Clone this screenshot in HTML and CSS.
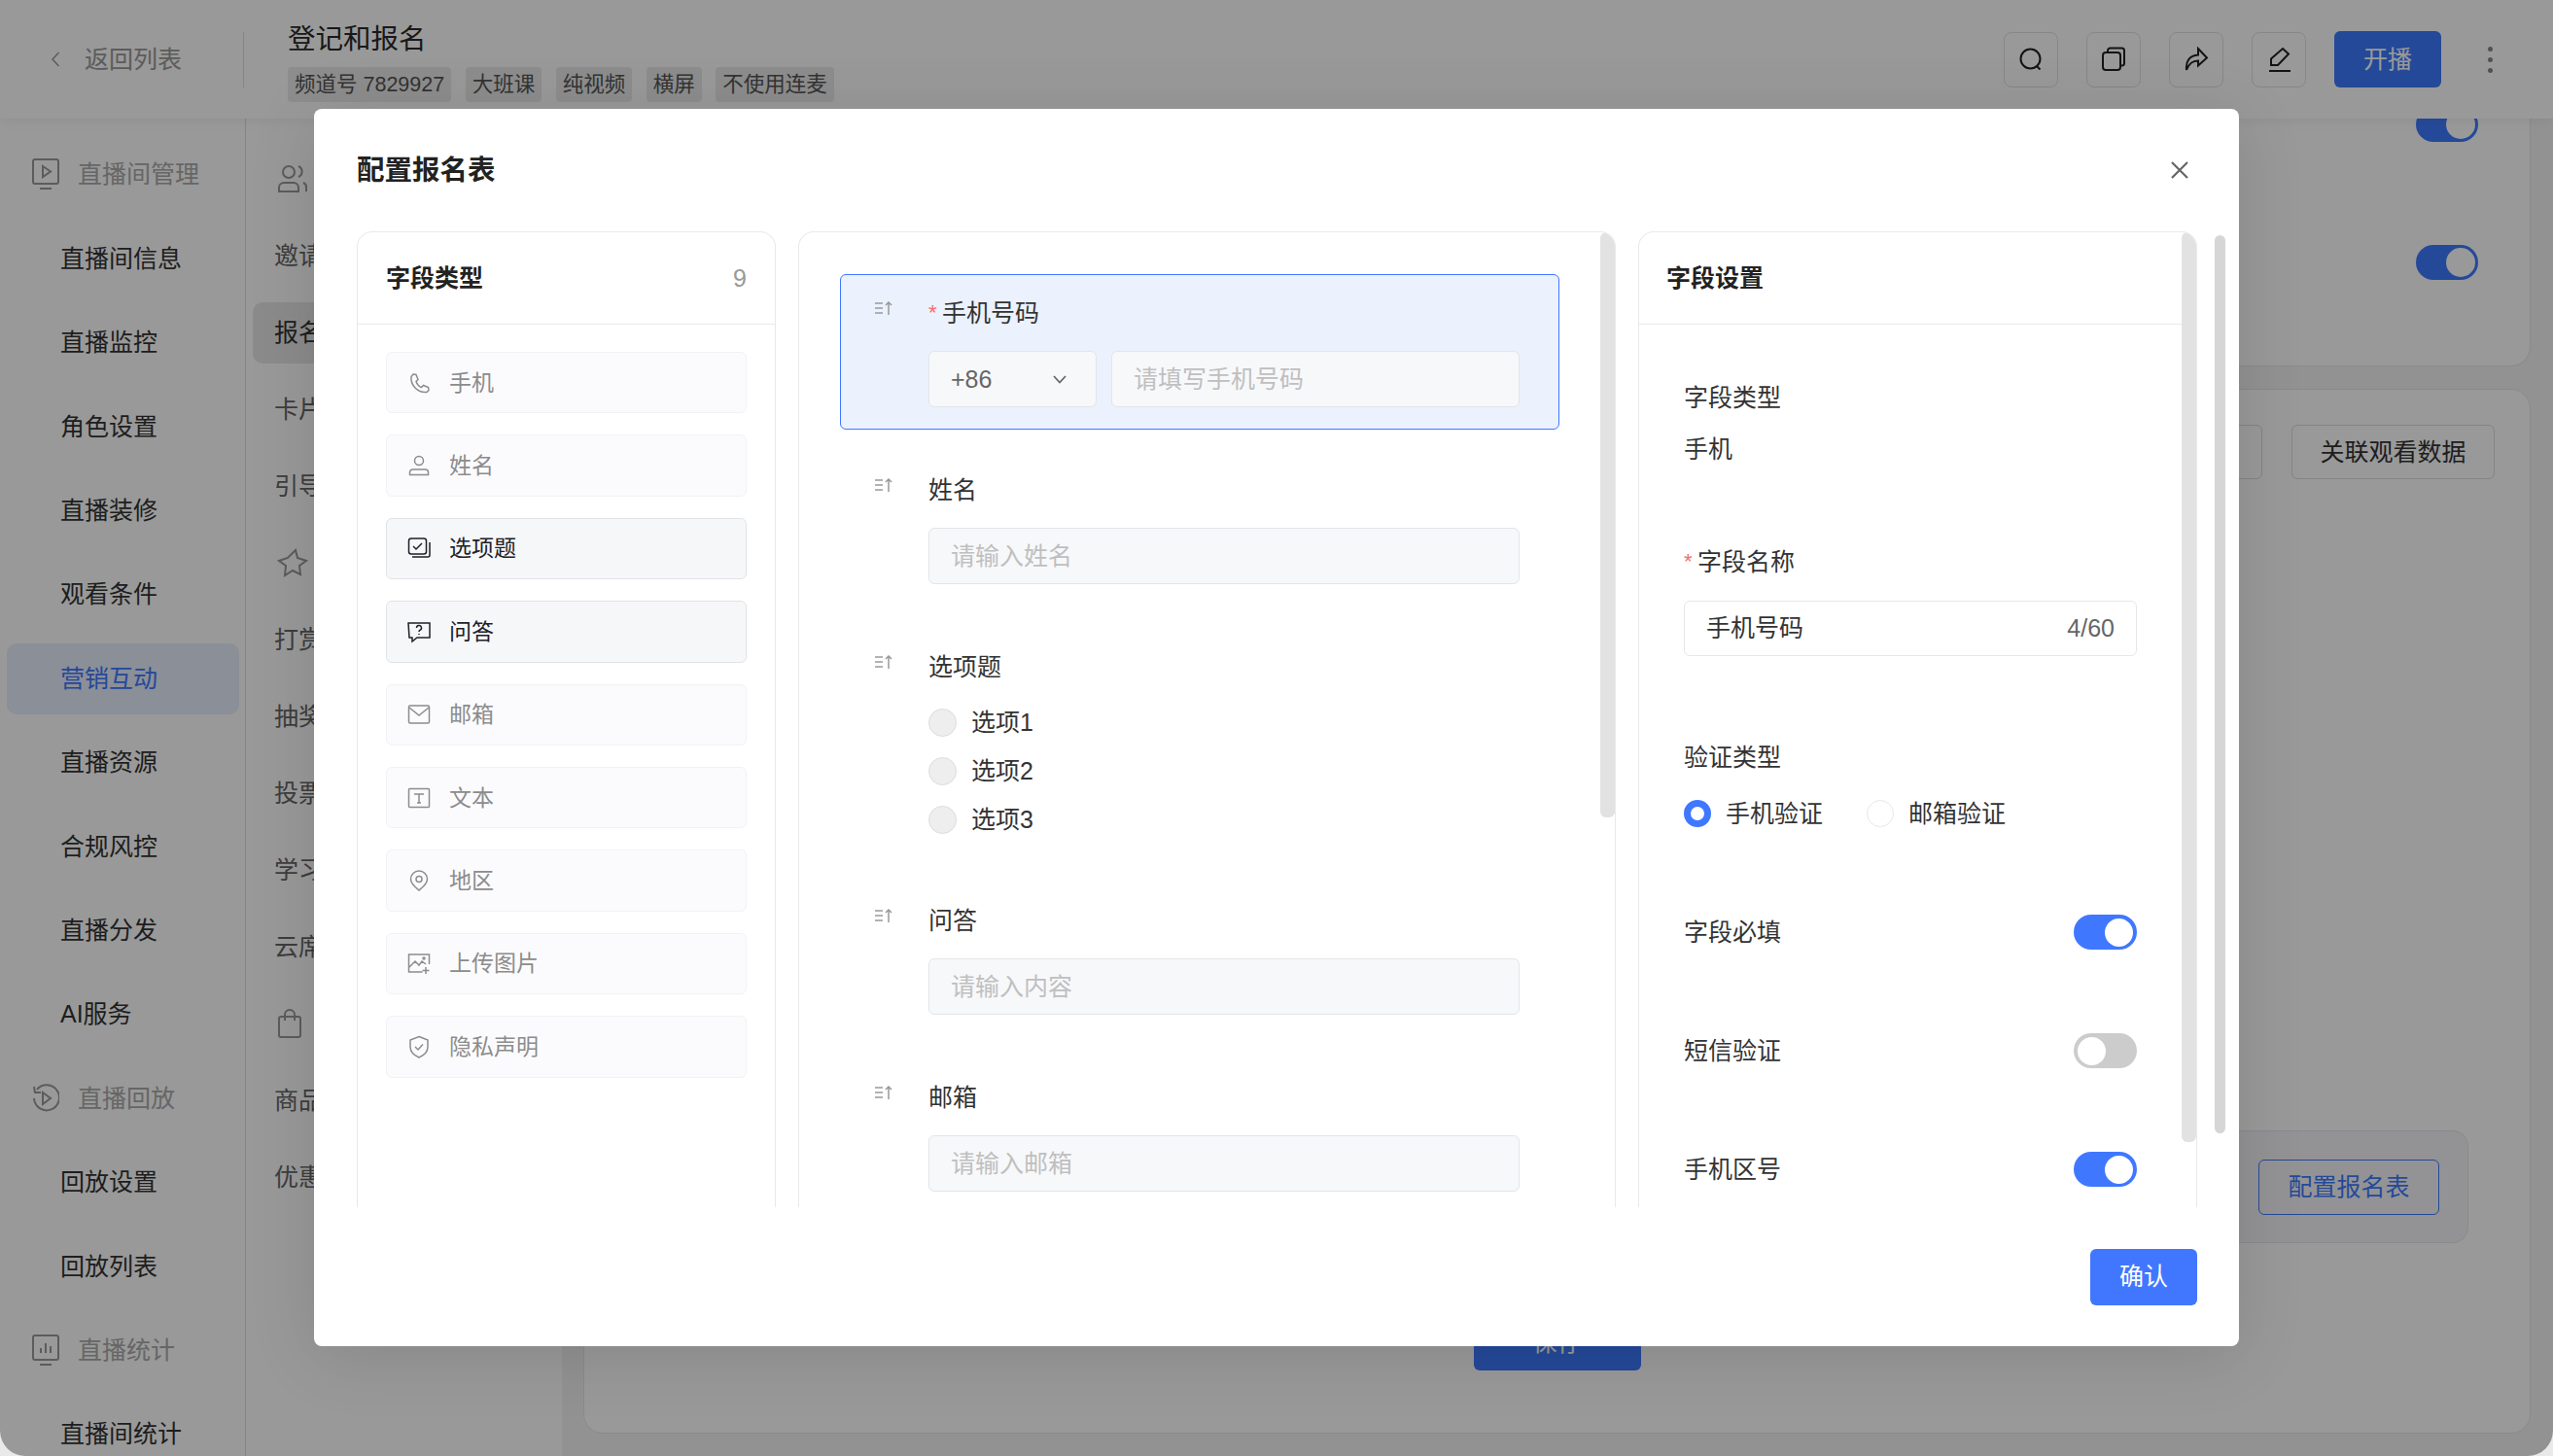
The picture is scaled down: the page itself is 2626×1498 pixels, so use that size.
FILE: index.html
```html
<!DOCTYPE html>
<html lang="zh-CN">
<head>
<meta charset="utf-8">
<title>配置报名表</title>
<link rel="stylesheet" href="styles.css">
</head>
<body>
<div class="app">
  <header class="topbar">
    <div class="back">
      <svg class="back-icon" width="10" height="18" viewBox="0 0 10 18"><path d="M8.500 2L2 9l6.500 7"/></svg>
      <span>返回列表</span>
    </div>
    <div class="top-info">
      <div class="top-title">登记和报名</div>
      <div class="tags">
        <span class="tag">频道号 7829927</span>
        <span class="tag">大班课</span>
        <span class="tag">纯视频</span>
        <span class="tag">横屏</span>
        <span class="tag">不使用连麦</span>
      </div>
    </div>
    <div class="top-actions">
      <div class="icon-btn"><svg width="26" height="26" viewBox="0 0 26 26"><circle cx="12.500" cy="12.500" r="10"/><path d="M19 20l3.500 3.500"/></svg></div>
      <div class="icon-btn"><svg width="26" height="26" viewBox="0 0 26 26"><rect x="2" y="6" width="18" height="18" rx="3"/><path d="M7 6V4a2.500 2.500 0 0 1 2.500-2.500h12A2.500 2.500 0 0 1 24 4v13a2.500 2.500 0 0 1-2.500 2.500H20"/></svg></div>
      <div class="icon-btn"><svg width="26" height="26" viewBox="0 0 26 26"><path d="M15 2l9 9.500-9 8v-5c-5.500 0-9 2-12 9.500-1-9 3-15 12-15.500z"/></svg></div>
      <div class="icon-btn"><svg width="26" height="26" viewBox="0 0 26 26"><path d="M17 2l6 5.500-11 11.500H5v-6.500zM3 25h22"/></svg></div>
      <div class="live-btn">开播</div>
      <div class="dots"><i></i><i></i><i></i></div>
    </div>
  </header>

  <div class="workspace">
    <nav class="nav">
      <div class="nav-item section"><svg width="28" height="33" viewBox="0 0 28 33"><rect x="1" y="1" width="26" height="25" rx="2"/><path d="M11 8l8 5.500-8 5.500zM8 31h12"/></svg><span>直播间管理</span></div>
      <div class="nav-item">直播间信息</div>
      <div class="nav-item">直播监控</div>
      <div class="nav-item">角色设置</div>
      <div class="nav-item">直播装修</div>
      <div class="nav-item">观看条件</div>
      <div class="nav-item active">营销互动</div>
      <div class="nav-item">直播资源</div>
      <div class="nav-item">合规风控</div>
      <div class="nav-item">直播分发</div>
      <div class="nav-item">AI服务</div>
      <div class="nav-item section"><svg width="28" height="30" viewBox="0 0 28 30"><path d="M5 6a13 13 0 1 1-3 9M2 3l1 6h6"/><path d="M11 9l8 6-8 6z"/></svg><span>直播回放</span></div>
      <div class="nav-item">回放设置</div>
      <div class="nav-item">回放列表</div>
      <div class="nav-item section"><svg width="28" height="33" viewBox="0 0 28 33"><rect x="1" y="1" width="26" height="25" rx="2"/><path d="M9 19v-5M14 19V9M19 19v-7M8 31h12"/></svg><span>直播统计</span></div>
      <div class="nav-item">直播间统计</div>
    </nav>

    <aside class="subnav">
      <div class="sub-item"><svg width="32" height="30" viewBox="0 0 32 30"><circle cx="12" cy="8" r="6"/><path d="M2 28v-4a5 5 0 0 1 5-5h10a5 5 0 0 1 5 5v4zM22 2a6 6 0 0 1 0 11M27 19a5 5 0 0 1 3 5v4"/></svg></div>
      <div class="sub-item">邀请榜单</div>
      <div class="sub-item selected">报名登记</div>
      <div class="sub-item">卡片推送</div>
      <div class="sub-item">引导关注</div>
      <div class="sub-item"><svg width="32" height="30" viewBox="0 0 32 30"><path d="M19 2l2 8 9 3-7 5 1 9-8-4-8 5 1-10-7-5 9-3z"/></svg></div>
      <div class="sub-item">打赏设置</div>
      <div class="sub-item">抽奖活动</div>
      <div class="sub-item">投票互动</div>
      <div class="sub-item">学习中心</div>
      <div class="sub-item">云席设置</div>
      <div class="sub-item"><svg width="26" height="30" viewBox="0 0 26 30"><rect x="2" y="8" width="22" height="21" rx="2"/><path d="M8 12V6a5 5 0 0 1 10 0v6"/></svg></div>
      <div class="sub-item">商品列表</div>
      <div class="sub-item">优惠券</div>
    </aside>

    <main class="main">
      <section class="card card-top">
        <span class="bg-toggle first"><i></i></span>
        <span class="bg-toggle"><i></i></span>
      </section>
      <section class="card card-form">
        <div class="bg-btn-row">
          <span class="bg-btn wide">导入观众数据</span>
          <span class="bg-btn">关联观看数据</span>
        </div>
        <div class="config-box"><span class="config-btn">配置报名表</span></div>
        <div class="save-btn">保存</div>
      </section>
    </main>
  </div>

  <div class="mask"></div>

  <div class="modal">
    <div class="modal-head">
      <h2 class="modal-title">配置报名表</h2>
      <svg class="close" width="20" height="20" viewBox="0 0 20 20"><path d="M2 2l16 16M18 2L2 18"/></svg>
    </div>

    <div class="modal-body">
      <section class="panel panel-types">
        <div class="panel-head"><span>字段类型</span><span class="count">9</span></div>
        <div class="type-list">
          <div class="type-item"><svg viewBox="0 0 24 24"><path d="M6 3l3 .5 2 5-2 2c1 3 3 5 5.500 6l2-2 5 2 .5 3-2 2c-9 1-17-7-16-16z"/></svg>手机</div>
          <div class="type-item"><svg viewBox="0 0 24 24"><circle cx="12" cy="7" r="4.500"/><path d="M2.500 21.500V19a3 3 0 0 1 3-3h13a3 3 0 0 1 3 3v2.500z"/></svg>姓名</div>
          <div class="type-item on"><svg viewBox="0 0 24 24"><rect x="1.500" y="2" width="18" height="16" rx="2.500"/><path d="M6 10l3 3 6-6M23 6v13a2 2 0 0 1-2 2H5"/></svg>选项题</div>
          <div class="type-item on"><svg viewBox="0 0 24 24"><path d="M1 3h22v15H10l-5 4v-4H2z"/><path d="M9.500 8a2.500 2.500 0 1 1 3.700 2.200c-.8.500-1.200 1-1.200 1.800M12 14v1"/></svg>问答</div>
          <div class="type-item"><svg viewBox="0 0 24 24"><rect x="1.500" y="3" width="21" height="18" rx="1.500"/><path d="M2 5l10 8 10-8"/></svg>邮箱</div>
          <div class="type-item"><svg viewBox="0 0 24 24"><rect x="1.500" y="2.500" width="21" height="19" rx="1"/><path d="M7 8h10M12 8v9M10 17h4"/></svg>文本</div>
          <div class="type-item"><svg viewBox="0 0 24 24"><path d="M12 2a8.500 8.500 0 0 1 8.500 8.500c0 5-5 8.500-8.500 11.500-3.500-3-8.500-6.500-8.500-11.500A8.500 8.500 0 0 1 12 2z"/><circle cx="12" cy="10.500" r="3"/></svg>地区</div>
          <div class="type-item"><svg viewBox="0 0 24 24"><path d="M22.500 13V3h-21v18h14M2 16l6-6 4 4 3-4 4 3M19 16v7M15.500 19.500h7"/><circle cx="17" cy="7" r="1"/></svg>上传图片</div>
          <div class="type-item"><svg viewBox="0 0 24 24"><path d="M12 1.500l9 3.500v7c0 5.500-4.500 9-9 11-4.500-2-9-5.500-9-11V5z"/><path d="M8 12l3 3 5-5.500"/></svg>隐私声明</div>
        </div>
      </section>

      <section class="panel panel-form">
        <div class="field-card current">
          <svg class="drag" viewBox="0 0 19 14"><path d="M0 2h8M0 7h8M0 12h8M14 14V1M11 4l3-3 3 3"/></svg>
          <div class="field-main">
            <div class="field-label"><span class="req">*</span>手机号码</div>
            <div class="phone-row">
              <div class="select">+86<svg width="14" height="9" viewBox="0 0 14 9"><path d="M1 1l6 6.500L13 1"/></svg></div>
              <div class="input phone">请填写手机号码</div>
            </div>
          </div>
        </div>
        <div class="field-card">
          <svg class="drag" viewBox="0 0 19 14"><path d="M0 2h8M0 7h8M0 12h8M14 14V1M11 4l3-3 3 3"/></svg>
          <div class="field-main">
            <div class="field-label">姓名</div>
            <div class="input">请输入姓名</div>
          </div>
        </div>
        <div class="field-card options">
          <svg class="drag" viewBox="0 0 19 14"><path d="M0 2h8M0 7h8M0 12h8M14 14V1M11 4l3-3 3 3"/></svg>
          <div class="field-main">
            <div class="field-label">选项题</div>
            <div class="option-list">
              <div class="option"><i class="dot"></i>选项1</div>
              <div class="option"><i class="dot"></i>选项2</div>
              <div class="option"><i class="dot"></i>选项3</div>
            </div>
          </div>
        </div>
        <div class="field-card">
          <svg class="drag" viewBox="0 0 19 14"><path d="M0 2h8M0 7h8M0 12h8M14 14V1M11 4l3-3 3 3"/></svg>
          <div class="field-main">
            <div class="field-label">问答</div>
            <div class="input">请输入内容</div>
          </div>
        </div>
        <div class="field-card">
          <svg class="drag" viewBox="0 0 19 14"><path d="M0 2h8M0 7h8M0 12h8M14 14V1M11 4l3-3 3 3"/></svg>
          <div class="field-main">
            <div class="field-label">邮箱</div>
            <div class="input">请输入邮箱</div>
          </div>
        </div>
        <div class="thumb thumb-form"></div>
      </section>

      <section class="panel panel-settings">
        <div class="panel-head"><span>字段设置</span></div>
        <div class="settings">
          <div class="line">字段类型</div>
          <div class="line value">手机</div>
          <div class="line name-label"><span class="req">*</span>字段名称</div>
          <div class="name-input"><span>手机号码</span><span class="counter">4/60</span></div>
          <div class="line verify-label">验证类型</div>
          <div class="verify">
            <span class="radio-opt"><i class="radio on"></i>手机验证</span>
            <span class="radio-opt"><i class="radio"></i>邮箱验证</span>
          </div>
          <div class="switch-row"><span>字段必填</span><span class="toggle"><i></i></span></div>
          <div class="switch-row"><span>短信验证</span><span class="toggle off"><i></i></span></div>
          <div class="switch-row"><span>手机区号</span><span class="toggle"><i></i></span></div>
        </div>
        <div class="thumb thumb-settings"></div>
      </section>
      <div class="thumb thumb-outer"></div>
    </div>

    <div class="modal-foot"><span class="confirm">确认</span></div>
  </div>
</div>
</body>
</html>
```

FILE: styles.css
```css
* { box-sizing: border-box; }
html, body { margin: 0; padding: 0; background: #e9e9e9; }
body { font-family: "Liberation Sans", "Noto Sans CJK SC", sans-serif; font-size: 25px; line-height: 1.4; color: #333; }
svg { fill: none; stroke: currentColor; flex: none; }
i { display: block; font-style: normal; }

.app { position: relative; width: 2626px; height: 1498px; overflow: hidden; display: flex; flex-direction: column; background: #fff; border-radius: 0 0 26px 26px; }

/* top bar */
.topbar { height: 122px; flex: none; display: flex; align-items: center; background: #fff; box-shadow: 0 3px 12px rgba(0,0,0,.06); position: relative; z-index: 2; }
.back { width: 251px; height: 57px; display: flex; align-items: center; gap: 25px; padding-left: 52px; border-right: 1px solid #ddd; color: #999; }
.back-icon { stroke-width: 1.500; }
.top-info { margin-left: 45px; align-self: flex-start; padding-top: 18px; }
.top-title { font-size: 28.500px; line-height: 44px; color: #2a2a2a; }
.tags { display: flex; gap: 14.500px; margin-top: 7px; }
.tag { height: 36px; line-height: 36px; padding: 0 7px; font-size: 21.500px; background: #ececec; border-radius: 4px; color: #555; white-space: nowrap; }
.top-actions { margin-left: auto; display: flex; align-items: center; gap: 29px; padding-right: 62px; }
.icon-btn { width: 56px; height: 57px; border: 1px solid #e2e2e2; border-radius: 8px; display: flex; align-items: center; justify-content: center; color: #222; }
.icon-btn svg { stroke-width: 2; }
.live-btn { width: 110px; height: 58px; background: #3f7bff; color: #fff; border-radius: 6px; display: flex; align-items: center; justify-content: center; }
.dots { display: flex; flex-direction: column; gap: 6px; margin-left: 19px; }
.dots i { width: 5px; height: 5px; border-radius: 50%; background: #888; }

.workspace { flex: 1; display: flex; min-height: 0; }

/* left nav */
.nav { width: 253px; flex: none; padding-top: 21.800px; border-right: 1px solid #ddd; background: #fff; color: #333; }
.nav-item { height: 72.400px; margin: 0 6px 14px 7px; padding-left: 55px; display: flex; align-items: center; border-radius: 10px; white-space: nowrap; }
.nav-item.section { padding-left: 26px; gap: 19px; color: #aaa; }
.nav-item.section svg { stroke-width: 2; width: 28px; color: #999; }
.nav-item.active { background: #e6eefd; color: #3f77ff; }

/* sub nav */
.subnav { width: 325px; flex: none; padding-top: 30.500px; background: #fff; color: #666; }
.sub-item { height: 63px; margin: 0 0 16px 7px; padding-left: 22px; display: flex; align-items: center; border-radius: 10px 0 0 10px; white-space: nowrap; }
.sub-item svg { stroke-width: 2; color: #999; margin-left: 3px; }
.sub-item.selected { background: #e8e8e8; color: #333; }

/* main */
.main { flex: 1; min-width: 0; display: flex; flex-direction: column; gap: 23px; padding: 0 23px 0 22px; background: #f4f4f5; }
.card { background: #fff; border: 1px solid #e6e6e6; }
.card-top { height: 255px; border-top: 0; border-radius: 0 0 20px 20px; display: flex; flex-direction: column; align-items: flex-end; gap: 106px; padding-right: 53px; }
.bg-toggle { width: 64px; height: 36px; padding: 3px; border-radius: 18px; background: #3f7bff; display: flex; justify-content: flex-end; }
.bg-toggle.first { margin-top: -12px; }
.bg-toggle i { width: 30px; height: 30px; border-radius: 50%; background: #fff; }
.card-form { height: 1075px; border-radius: 20px; display: flex; flex-direction: column; align-items: center; padding-top: 36px; }
.bg-btn-row { align-self: flex-end; display: flex; gap: 30px; margin-right: 36px; }
.bg-btn { width: 209px; height: 56px; border: 1px solid #ddd; border-radius: 6px; display: flex; align-items: center; justify-content: center; color: #333; }
.config-box { align-self: stretch; height: 116px; margin: 670px 63px 0 40px; border: 1px solid #e4e6ea; border-radius: 16px; background: #f5f6f9; display: flex; align-items: center; justify-content: flex-end; padding-right: 29px; }
.config-btn { width: 186px; height: 57px; border: 1px solid #3f7bff; border-radius: 6px; display: flex; align-items: center; justify-content: center; color: #3f7bff; }
.save-btn { width: 172px; height: 58px; margin-top: 73px; background: #3f7bff; color: #fff; border-radius: 6px; display: flex; align-items: center; justify-content: center; }

.mask { position: absolute; inset: 0; background: rgba(0,0,0,.4); z-index: 3; }

/* modal */
.modal { position: absolute; left: 323px; top: 112px; width: 1980px; height: 1273px; z-index: 4; background: #fff; border-radius: 8px; box-shadow: 0 10px 70px rgba(0,0,0,.12); display: flex; flex-direction: column; }
.modal-head { height: 126px; flex: none; display: flex; align-items: center; justify-content: space-between; padding: 0 51px 0 44px; }
.modal-title { margin: 0; padding-top: 2px; font-size: 28.500px; font-weight: 700; color: #222; }
.close { color: #666; stroke-width: 2.200; }
.modal-body { position: relative; height: 1004px; flex: none; margin-left: 44px; display: flex; overflow: hidden; }
.panel { position: relative; height: 1004px; flex: none; border: 1px solid #e8e9eb; border-bottom: 0; border-radius: 16px 16px 0 0; overflow: hidden; }
.panel-types { width: 431px; }
.panel-form { width: 841px; margin-left: 23px; padding: 43px 0 0 42px; display: flex; flex-direction: column; gap: 22px; }
.panel-settings { width: 575px; margin-left: 23px; }
.panel-head { height: 95px; border-bottom: 1px solid #e8e9eb; display: flex; align-items: center; justify-content: space-between; padding: 0 29px; font-weight: 700; color: #222; }
.panel-settings .panel-head { padding-left: 28px; margin-right: 15px; }
.count { font-weight: 400; color: #999; }

.type-list { padding: 28px 29px 0; display: flex; flex-direction: column; gap: 22px; }
.type-item { height: 63.400px; display: flex; align-items: center; gap: 19px; padding-left: 21px; border: 1px solid #f1f2f4; border-radius: 6px; background: #fbfbfd; font-size: 23px; color: #8c8c8c; }
.type-item svg { width: 24px; height: 24px; stroke-width: 1.500; }
.type-item.on { background: #f6f7f9; border-color: #e1e3e6; color: #1d2129; }

.field-card { flex: none; width: 740px; min-height: 160px; display: flex; padding: 21px 40px 0 35px; border: 1px solid transparent; border-radius: 6px; }
.field-card.options { min-height: 239px; }
.field-card.current { background: #ebf1fd; border-color: #3f77ff; }
.drag { width: 19px; height: 14px; margin: 6px 36px 0 0; stroke-width: 1.500; color: #999; }
.field-main { flex: 1; min-width: 0; }
.field-label { height: 36px; line-height: 36px; color: #333; }
.req { color: #f56c6c; margin-right: 5.500px; font-size: 22px; position: relative; top: -2px; }
.phone-row { display: flex; gap: 15px; margin-top: 21px; }
.input { height: 58px; margin-top: 21px; padding: 0 22px; display: flex; align-items: center; background: #f7f8fa; border: 1px solid #e3e5e8; border-radius: 6px; color: #bfbfbf; }
.input.phone { flex: 1; margin-top: 0; }
.select { width: 173px; height: 58px; padding: 0 15px 0 22px; display: flex; align-items: center; justify-content: space-between; background: #f7f8fa; border: 1px solid #e3e5e8; border-radius: 6px; color: #666; }
.select svg { margin-right: 15px; stroke-width: 1.800; }
.option-list { margin-top: 14.500px; }
.option { height: 50px; display: flex; align-items: center; gap: 15px; }
.dot { width: 29px; height: 29px; border-radius: 50%; background: #eeeeee; border: 1px solid #dcdcdc; }

.settings { padding: 57px 0 0 46px; width: 512px; }
.line { height: 36px; line-height: 36px; }
.value { margin-top: 17px; }
.name-label { margin-top: 80px; }
.name-input { height: 57px; margin-top: 22px; padding: 0 22px; display: flex; align-items: center; justify-content: space-between; border: 1px solid #e6e7ea; border-radius: 6px; }
.counter { color: #666; }
.verify-label { margin-top: 86px; }
.verify { display: flex; gap: 45px; height: 36px; margin-top: 22px; }
.radio-opt { display: flex; align-items: center; gap: 15px; }
.radio { width: 28px; height: 28px; border-radius: 50%; border: 1px solid #e8e8e8; background: #fff; }
.radio.on { border: 7px solid #3f77ff; }
.switch-row { height: 36px; margin-top: 86px; display: flex; align-items: center; justify-content: space-between; }
.toggle { width: 65px; height: 36px; padding: 3.500px 4px; border-radius: 18px; background: #3f77ff; display: flex; justify-content: flex-end; }
.toggle i { width: 29px; height: 29px; border-radius: 50%; background: #fff; }
.toggle.off { background: #ccc; justify-content: flex-start; }

.thumb { position: absolute; width: 15px; background: #e2e2e2; }
.thumb-form { right: 0; top: 0; height: 602px; border-radius: 6px; }
.thumb-settings { right: 0; top: 0; height: 936px; border-radius: 6px; }
.thumb-outer { left: 1911px; top: 4px; width: 11px; height: 924px; border-radius: 6px; background: #d6d6d6; }

.modal-foot { flex: 1; display: flex; justify-content: flex-end; padding: 43px 43px 0 0; }
.confirm { width: 110px; height: 58px; padding-bottom: 2px; background: #4177ff; color: #fff; border-radius: 6px; display: flex; align-items: center; justify-content: center; }
```
